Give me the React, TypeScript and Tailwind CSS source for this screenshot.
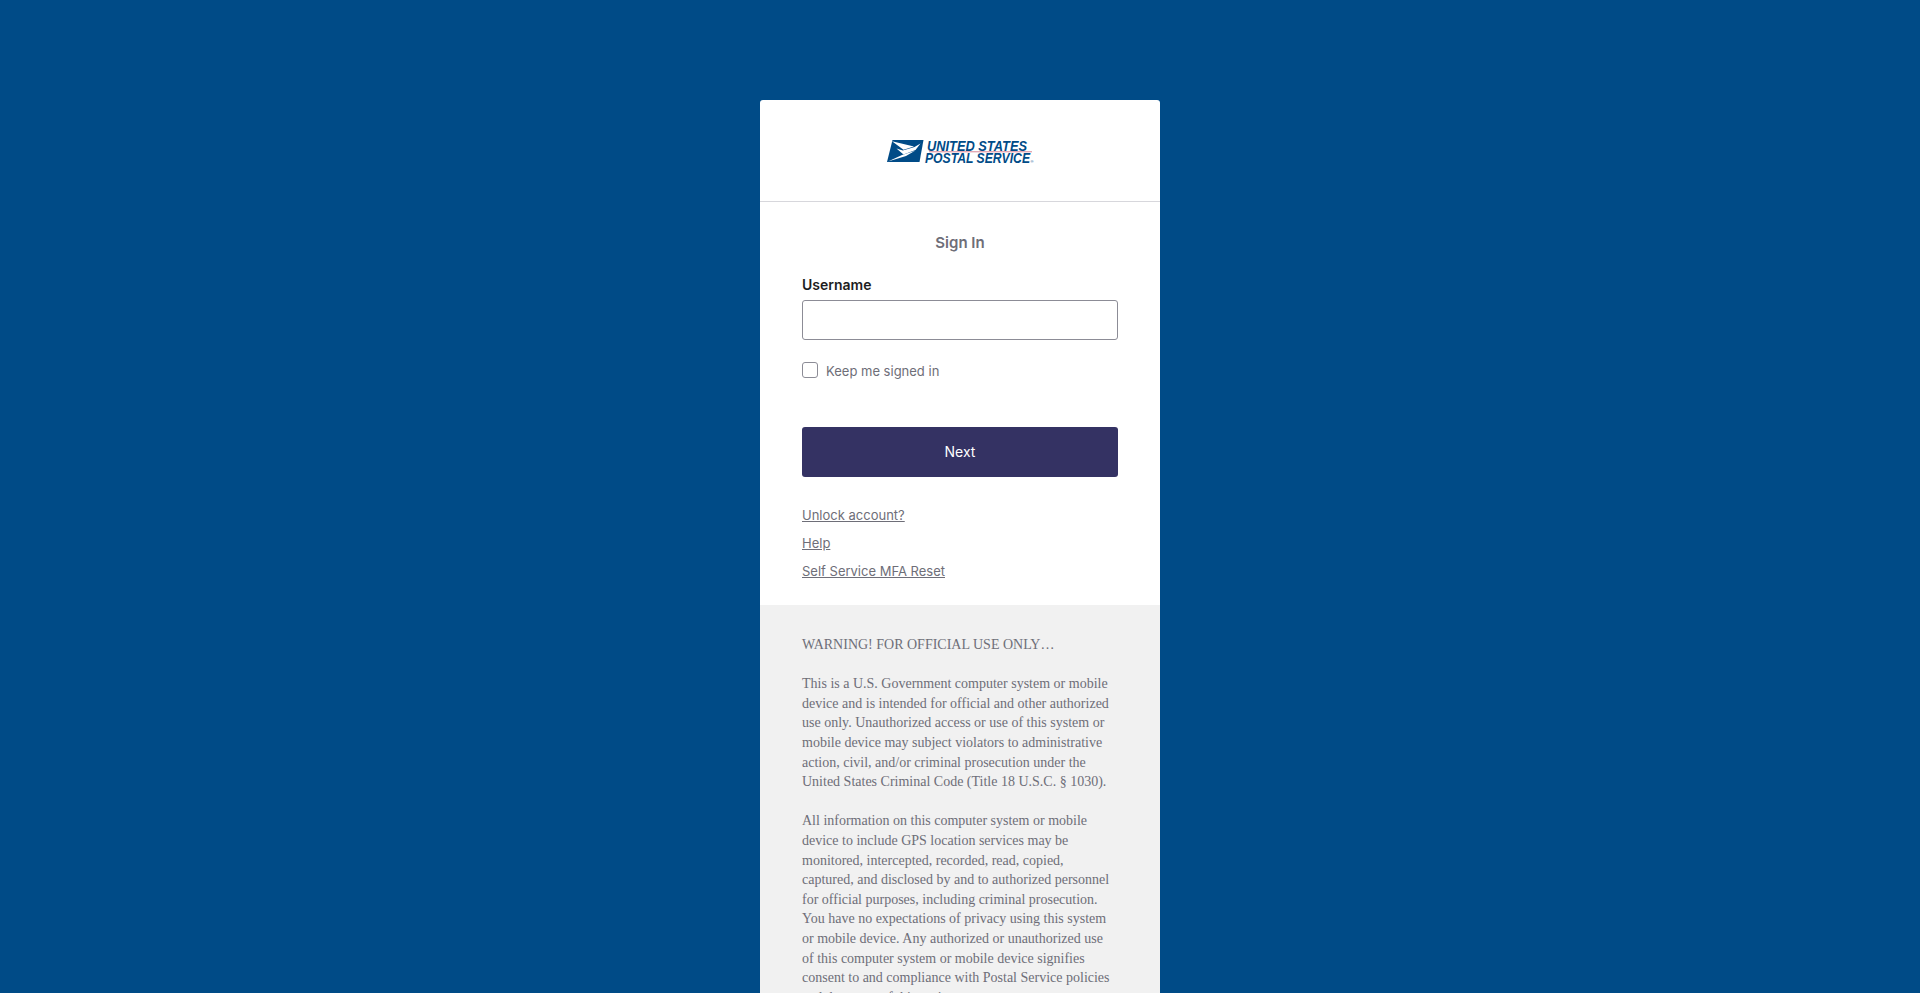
import React from "react";

function Logo() {
  return (
    <svg width="147" height="24" viewBox="0 0 147 24" className="block overflow-visible">
      <polygon points="5.5,0 36.5,0 32.5,22 0,22" fill="#004B87" />
      <path d="M5,1.2 L27,6.6 L16.5,9.8 Z" fill="#fff" />
      <path d="M9.5,8.6 L15.8,10.6 L27.5,7 L33.5,3.6 L28.5,10 L16.5,14.4 Z" fill="#fff" />
      <path d="M1,21.6 L15,15 L28,10.8 L19,16 Z" fill="#fff" />
      <g fill="#004B87" fontFamily="'Liberation Sans', Arial, sans-serif" fontWeight="700" fontStyle="italic" fontSize="14">
        <text x="40" y="10.8" textLength="100" lengthAdjust="spacingAndGlyphs">UNITED STATES</text>
        <text x="38" y="22.6" textLength="105" lengthAdjust="spacingAndGlyphs">POSTAL SERVICE</text>
        <text x="143.4" y="22.6" fontSize="4" fontWeight="400" fontStyle="normal">®</text>
      </g>
      <rect x="42" y="11.5" width="103" height="0.7" fill="#c8526a" />
    </svg>
  );
}

export default function App() {
  return (
    <div className="h-[993px] overflow-hidden bg-[#004B87] pt-[100px] font-['Inter',sans-serif]">
      <div className="mx-auto w-[400px] overflow-hidden rounded-t-[3px] bg-white">
        <div className="flex h-[102px] justify-center border-b border-[#d7d7dc] pt-[40px]">
          <Logo />
        </div>
        <div className="px-[42px] pt-[31px] pb-[24px]">
          <h1 className="text-center text-[15px] leading-[20px] font-semibold text-[#6e6e78]">Sign In</h1>
          <label className="mt-[22px] block text-[14px] leading-[20px] font-semibold text-[#1d1d21]">Username</label>
          <input className="mt-[5px] block h-[40px] w-full rounded-[3px] border border-[#8c8c96] bg-white" />
          <div className="mt-[22px] flex items-start">
            <div className="h-[16px] w-[16px] rounded-[3px] border border-[#8c8c96] bg-white" />
            <span className="ml-[8px] text-[13px] leading-[19px] text-[#6e6e78]">Keep me signed in</span>
          </div>
          <button className="mt-[46px] block h-[50px] w-full rounded-[3px] bg-[#343263] pb-[1px] text-[14px] text-white">Next</button>
          <ul className="mt-[28px] text-[13px] leading-[20px] text-[#6e6e78]">
            <li><a className="underline">Unlock account?</a></li>
            <li className="mt-[8px]"><a className="underline">Help</a></li>
            <li className="mt-[8px]"><a className="underline">Self Service MFA Reset</a></li>
          </ul>
        </div>
        <div className="bg-[#f1f1f1] px-[42px] pt-[30px] pb-[40px] font-['Liberation_Serif',serif] text-[14px] leading-[19.6px] text-[#6e6e78]">
          <p>WARNING! FOR OFFICIAL USE ONLY…</p>
          <p className="mt-[19.6px]">This is a U.S. Government computer system or mobile device and is intended for official and other authorized use only. Unauthorized access or use of this system or mobile device may subject violators to administrative action, civil, and/or criminal prosecution under the United States Criminal Code (Title 18 U.S.C. § 1030).</p>
          <p className="mt-[19.6px]">All information on this computer system or mobile device to include GPS location services may be monitored, intercepted, recorded, read, copied, captured, and disclosed by and to authorized personnel for official purposes, including criminal prosecution. You have no expectations of privacy using this system or mobile device. Any authorized or unauthorized use of this computer system or mobile device signifies consent to and compliance with Postal Service policies and the terms of this notice.</p>
        </div>
      </div>
    </div>
  );
}
